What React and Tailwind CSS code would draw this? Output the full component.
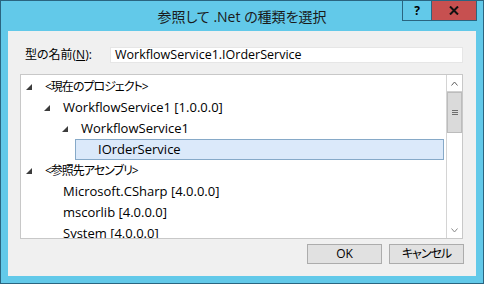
import React from "react";

const font = "font-['Open_Sans','Noto_Sans_CJK_JP',sans-serif] [font-feature-settings:'palt']";

function Expander({ open }) {
  return (
    <span className="w-[19px] shrink-0 flex items-center pl-[5px]">
      {open && (
        <svg width="6" height="6" viewBox="0 0 6 6">
          <polygon points="6,0 6,6 0,6" fill="#3c3c3c" />
        </svg>
      )}
    </span>
  );
}

function Row({ level, open, selected, jp, children }) {
  const text = jp ? "text-[12px] tracking-[-1px]" : "text-[13px]";
  return (
    <div className="h-[21px] flex items-center" style={{ paddingLeft: level * 18 }}>
      {selected ? (
        <div className="h-[21px] flex-1 flex items-center border border-[#86a9c8] bg-[#dbe9fa]">
          <span className="w-[18px] shrink-0" />
          <span className={`pl-[4px] ${text}`}>{children}</span>
        </div>
      ) : (
        <>
          <Expander open={open} />
          <span className={`pl-[5px] whitespace-nowrap ${text}`}>{children}</span>
        </>
      )}
    </div>
  );
}

function Scrollbar() {
  return (
    <div className="w-[16px] h-full flex flex-col border-l border-[#d4d4d4] bg-white">
      <div className="h-[17px] flex items-center justify-center border-b border-[#d0d0d0]">
        <svg width="7" height="5" viewBox="0 0 7 5">
          <polyline points="0.5,4.5 3.5,1 6.5,4.5" fill="none" stroke="#606060" strokeWidth="1" />
        </svg>
      </div>
      <div className="h-[41px] bg-[#dadada] border border-[#bcbcbc] flex items-center justify-center">
        <div className="flex flex-col gap-[1px]">
          <div className="w-[6px] h-[1px] bg-[#6e6e6e]" />
          <div className="w-[6px] h-[1px] bg-[#6e6e6e]" />
          <div className="w-[6px] h-[1px] bg-[#6e6e6e]" />
        </div>
      </div>
      <div className="flex-1" />
      <div className="h-[16px] flex items-center justify-center">
        <svg width="7" height="5" viewBox="0 0 7 5">
          <polyline points="0.5,0.5 3.5,4 6.5,0.5" fill="none" stroke="#8a8a8a" strokeWidth="1" />
        </svg>
      </div>
    </div>
  );
}

export default function App() {
  return (
    <div className={`w-[484px] h-[284px] border border-[#2a6580] bg-[#62c9e9] flex flex-col text-black ${font}`}>
      {/* title bar */}
      <div className="relative h-[30px] shrink-0 flex items-center justify-center">
        <span className="text-[14px] text-[#1a1a1a] pt-[1px]">参照して .Net の種類を選択</span>
        <div className="absolute right-[6px] top-[-1px] flex">
          <div className="w-[29px] h-[21px] border border-[#2a6580] border-r-0 flex items-center justify-center text-[12px] font-bold">?</div>
          <div className="w-[46px] h-[21px] border border-[#2a6580] bg-[#c75050] flex items-center justify-center">
            <svg width="10" height="9" viewBox="0 0 10 9">
              <path d="M1 0.5 L9 8.5 M9 0.5 L1 8.5" stroke="#111" strokeWidth="2" />
            </svg>
          </div>
        </div>
      </div>

      {/* client area */}
      <div className="mx-[7px] h-[245px] bg-[#f0f0f0] flex flex-col text-[12px]">
        <div className="mt-[16px] h-[16px] flex items-center">
          <span className="w-[102px] pl-[17px]">
            型の名前(<span className="underline">N</span>):
          </span>
          <div className="w-[353px] h-[16px] bg-white border border-[#e6e6e6] flex items-center pl-[4px] text-[12.5px]">
            WorkflowService1.IOrderService
          </div>
        </div>

        <div className="mt-[11px] ml-[12px] w-[443px] h-[165px] border border-[#c8c8c8] bg-white flex overflow-hidden">
          <div className="flex-1 pt-[1px] pr-[2px] overflow-hidden">
            <Row level={0} open jp>&lt;現在のプロジェクト&gt;</Row>
            <Row level={1} open>WorkflowService1 [1.0.0.0]</Row>
            <Row level={2} open>WorkflowService1</Row>
            <Row level={3} selected>IOrderService</Row>
            <Row level={0} open jp>&lt;参照先アセンブリ&gt;</Row>
            <Row level={1}>Microsoft.CSharp [4.0.0.0]</Row>
            <Row level={1}>mscorlib [4.0.0.0]</Row>
            <Row level={1}>System [4.0.0.0]</Row>
          </div>
          <Scrollbar />
        </div>

        <div className="mt-[5px] flex justify-end gap-[7px] pr-[12px]">
          <button className="w-[75px] h-[20px] bg-[#e1e1e1] border border-[#acacac] flex items-center justify-center">OK</button>
          <button className="w-[75px] h-[20px] bg-[#e1e1e1] border border-[#acacac] flex items-center justify-center tracking-[-1px]">キャンセル</button>
        </div>
      </div>
    </div>
  );
}
